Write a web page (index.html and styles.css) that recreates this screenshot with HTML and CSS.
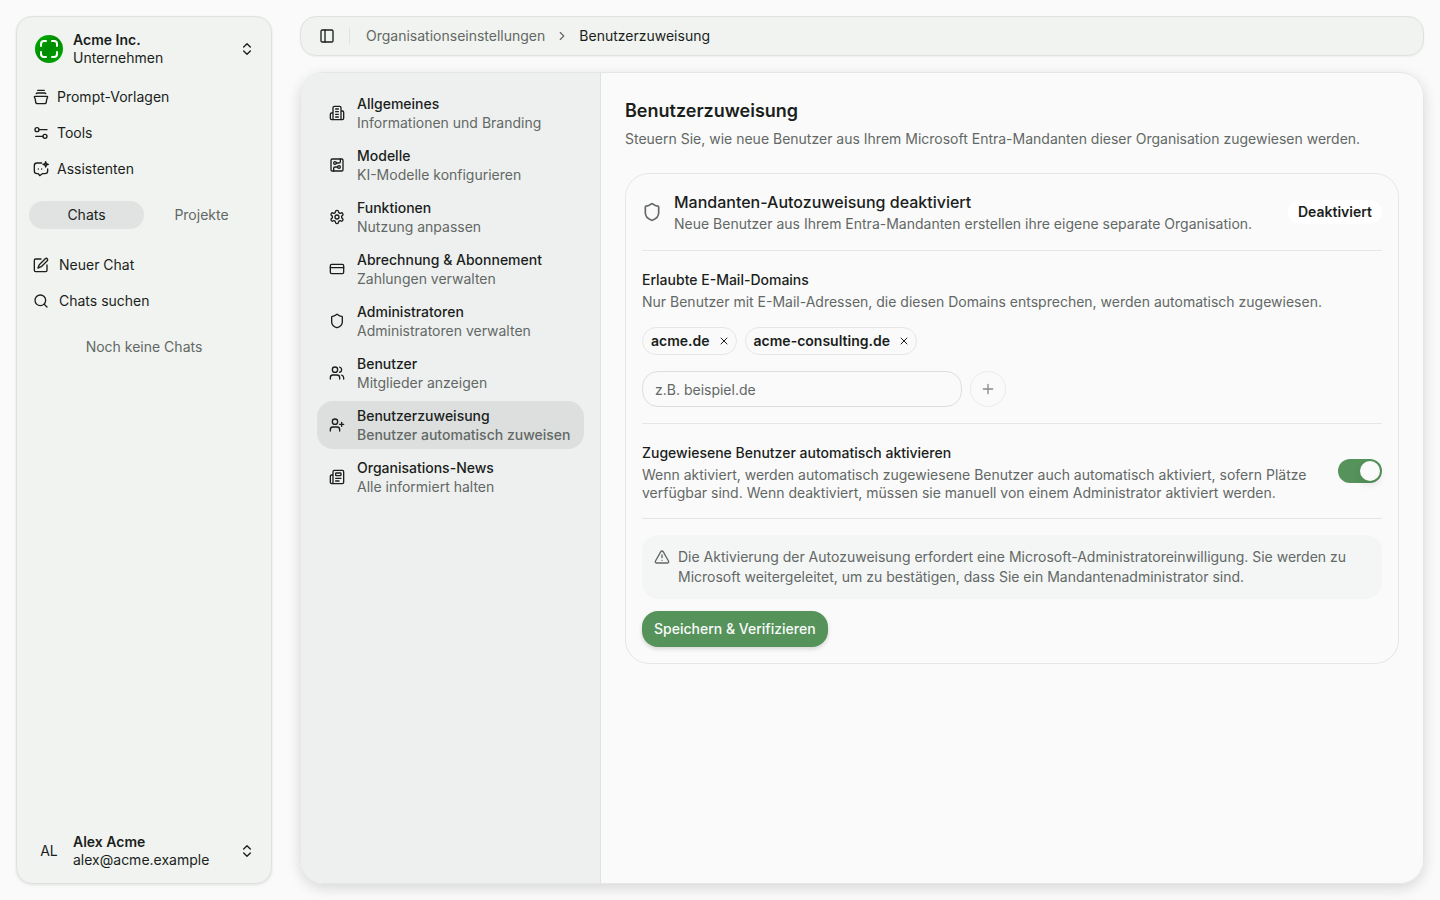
FILE: index.html
```
<!DOCTYPE html>
<html lang="de">
<head>
    <meta charset="UTF-8">
    <meta name="viewport" content="width=device-width, initial-scale=1.0">
    <title>Benutzerzuweisung</title>
    <link rel="stylesheet" href="styles.css">
</head>
<body>
    <aside class="sidebar">
        <button type="button" class="account">
            <span class="account-image">
                <svg class="logo" viewBox="0 0 28 28" fill="none" stroke="#fff" stroke-width="2" stroke-linecap="round">
                    <defs>
                        <linearGradient id="logoFill" x1="0" y1="0" x2="1" y2="1">
                            <stop offset="0" stop-color="#00b400"/>
                            <stop offset="0.5" stop-color="#008a00"/>
                            <stop offset="1" stop-color="#00b000"/>
                        </linearGradient>
                    </defs>
                    <circle cx="14" cy="14" r="14" fill="url(#logoFill)" stroke="none"/>
                    <path d="M6 11V9a3 3 0 0 1 3-3h2M17 6h2a3 3 0 0 1 3 3v2M22 17v2a3 3 0 0 1-3 3h-2M11 22H9a3 3 0 0 1-3-3v-2"/>
                </svg>
            </span>
            <span class="account-text">
                <strong>Acme Inc.</strong>
                <span>Unternehmen</span>
            </span>
            <svg class="icon" viewBox="0 0 24 24"><path d="m7 15 5 5 5-5M7 9l5-5 5 5"/></svg>
        </button>

        <nav class="menu">
            <a href="#" class="menu-item">
                <svg class="icon" viewBox="0 0 24 24"><path d="M7 2h10M5 7a2 2 0 0 1 2-1h10a2 2 0 0 1 2 1M3 11h18a1 1 0 0 1 1 1c0 1-1 1-1 2l-1 5a3 3 0 0 1-3 3H7a3 3 0 0 1-3-3l-1-5c0-1-1-1-1-2a1 1 0 0 1 1-1z"/></svg>
                Prompt-Vorlagen
            </a>
            <a href="#" class="menu-item">
                <svg class="icon" viewBox="0 0 24 24"><circle cx="6" cy="7" r="3"/><circle cx="18" cy="17" r="3"/><path d="M9 7h12M4 17h11"/></svg>
                Tools
            </a>
            <a href="#" class="menu-item">
                <svg class="icon" viewBox="0 0 24 24"><path d="M13 3H6a4 4 0 0 0-4 4v8a4 4 0 0 0 4 4h2l2 3 4-3h4a4 4 0 0 0 4-4v-3M19 1l1 3 3 1-3 1-1 3-1-3-3-1 3-1zM8 12h.01M13 12h.01"/></svg>
                Assistenten
            </a>
        </nav>

        <div class="tabs">
            <button type="button" class="tab active">Chats</button>
            <button type="button" class="tab">Projekte</button>
        </div>

        <nav class="menu chat-menu">
            <a href="#" class="menu-item">
                <svg class="icon" viewBox="0 0 24 24"><path d="M12 3H4a2 2 0 0 0-2 2v15a2 2 0 0 0 2 2h15a2 2 0 0 0 2-2v-8"/><path d="M18.4 2.6a2.1 2.1 0 0 1 3 3L12.400 14.600l-5 2 2-5z"/></svg>
                Neuer Chat
            </a>
            <a href="#" class="menu-item">
                <svg class="icon" viewBox="0 0 24 24"><circle cx="11" cy="11" r="8"/><path d="m21 21-4.300-4.300"/></svg>
                Chats suchen
            </a>
        </nav>
        <p class="no-chats">Noch keine Chats</p>

        <button type="button" class="account user">
            <span class="account-image initials">AL</span>
            <span class="account-text">
                <strong>Alex Acme</strong>
                <span>alex@acme.example</span>
            </span>
            <svg class="icon" viewBox="0 0 24 24"><path d="m7 15 5 5 5-5M7 9l5-5 5 5"/></svg>
        </button>
    </aside>

    <div class="page">
        <header class="topbar">
            <button type="button" class="toggle" aria-label="Seitenleiste umschalten">
                <svg class="icon" viewBox="0 0 24 24"><rect x="3" y="3" width="18" height="18" rx="2"/><path d="M9 3v18"/></svg>
            </button>
            <nav class="breadcrumb">
                <a href="#">Organisationseinstellungen</a>
                <svg class="icon" viewBox="0 0 24 24"><path d="m9 18 6-6-6-6"/></svg>
                <span>Benutzerzuweisung</span>
            </nav>
        </header>

        <div class="panel">
            <nav class="settings">
                <a href="#" class="settings-item">
                    <svg class="icon" viewBox="0 0 24 24"><path d="M6 22V4a2 2 0 0 1 2-2h8a2 2 0 0 1 2 2v18zM6 12H4a2 2 0 0 0-2 2v6a2 2 0 0 0 2 2h2M18 9h2a2 2 0 0 1 2 2v9a2 2 0 0 1-2 2h-2M10 6h4M10 10h4M10 14h4M10 18h4"/></svg>
                    <span class="settings-text"><strong>Allgemeines</strong><span>Informationen und Branding</span></span>
                </a>
                <a href="#" class="settings-item">
                    <svg class="icon" viewBox="0 0 24 24"><rect x="3" y="3" width="18" height="18" rx="2"/><path d="M11 9h4a2 2 0 0 0 2-2V3"/><circle cx="9" cy="9" r="2"/><path d="M7 21v-4a2 2 0 0 1 2-2h4"/><circle cx="15" cy="15" r="2"/></svg>
                    <span class="settings-text"><strong>Modelle</strong><span>KI-Modelle konfigurieren</span></span>
                </a>
                <a href="#" class="settings-item">
                    <svg class="icon" viewBox="0 0 24 24"><path d="M12.22 2h-.44a2 2 0 0 0-2 2v.18a2 2 0 0 1-1 1.73l-.43.25a2 2 0 0 1-2 0l-.15-.08a2 2 0 0 0-2.73.73l-.22.38a2 2 0 0 0 .73 2.73l.15.1a2 2 0 0 1 1 1.72v.51a2 2 0 0 1-1 1.74l-.15.09a2 2 0 0 0-.73 2.73l.22.38a2 2 0 0 0 2.73.73l.15-.08a2 2 0 0 1 2 0l.43.25a2 2 0 0 1 1 1.73V20a2 2 0 0 0 2 2h.44a2 2 0 0 0 2-2v-.18a2 2 0 0 1 1-1.73l.43-.25a2 2 0 0 1 2 0l.15.08a2 2 0 0 0 2.73-.73l.22-.39a2 2 0 0 0-.73-2.73l-.15-.08a2 2 0 0 1-1-1.74v-.5a2 2 0 0 1 1-1.74l.15-.09a2 2 0 0 0 .73-2.73l-.22-.38a2 2 0 0 0-2.73-.73l-.15.08a2 2 0 0 1-2 0l-.43-.25a2 2 0 0 1-1-1.73V4a2 2 0 0 0-2-2z"/><circle cx="12" cy="12" r="3"/></svg>
                    <span class="settings-text"><strong>Funktionen</strong><span>Nutzung anpassen</span></span>
                </a>
                <a href="#" class="settings-item">
                    <svg class="icon" viewBox="0 0 24 24"><rect x="2" y="5" width="20" height="14" rx="2"/><path d="M2 10h20"/></svg>
                    <span class="settings-text"><strong>Abrechnung &amp; Abonnement</strong><span>Zahlungen verwalten</span></span>
                </a>
                <a href="#" class="settings-item">
                    <svg class="icon" viewBox="0 0 24 24"><path d="M20 13c0 5-3.5 7.5-7.66 8.95a1 1 0 0 1-.67-.01C7.5 20.5 4 18 4 13V6a1 1 0 0 1 1-1c2 0 4.5-1.2 6.24-2.72a1.17 1.17 0 0 1 1.52 0C14.51 3.81 17 5 19 5a1 1 0 0 1 1 1z"/></svg>
                    <span class="settings-text"><strong>Administratoren</strong><span>Administratoren verwalten</span></span>
                </a>
                <a href="#" class="settings-item">
                    <svg class="icon" viewBox="0 0 24 24"><path d="M16 21v-2a4 4 0 0 0-4-4H6a4 4 0 0 0-4 4v2"/><circle cx="9" cy="7" r="4"/><path d="M22 21v-2a4 4 0 0 0-3-3.87M16 3.13a4 4 0 0 1 0 7.75"/></svg>
                    <span class="settings-text"><strong>Benutzer</strong><span>Mitglieder anzeigen</span></span>
                </a>
                <a href="#" class="settings-item active">
                    <svg class="icon" viewBox="0 0 24 24"><path d="M16 21v-2a4 4 0 0 0-4-4H6a4 4 0 0 0-4 4v2"/><circle cx="9" cy="7" r="4"/><path d="M19 8v6M22 11h-6"/></svg>
                    <span class="settings-text"><strong>Benutzerzuweisung</strong><span>Benutzer automatisch zuweisen</span></span>
                </a>
                <a href="#" class="settings-item">
                    <svg class="icon" viewBox="0 0 24 24"><path d="M15 18h-5M18 14h-8M4 22h16a2 2 0 0 0 2-2V4a2 2 0 0 0-2-2H8a2 2 0 0 0-2 2v16a2 2 0 0 1-4 0v-9a2 2 0 0 1 2-2h2"/><rect x="10" y="6" width="8" height="4" rx="1"/></svg>
                    <span class="settings-text"><strong>Organisations-News</strong><span>Alle informiert halten</span></span>
                </a>
            </nav>

            <main class="content">
                <h1>Benutzerzuweisung</h1>
                <p class="intro">Steuern Sie, wie neue Benutzer aus Ihrem Microsoft Entra-Mandanten dieser Organisation zugewiesen werden.</p>

                <div class="card">
                    <section class="status">
                        <svg class="icon icon-large" viewBox="0 0 24 24"><path d="M20 13c0 5-3.5 7.5-7.66 8.95a1 1 0 0 1-.67-.01C7.5 20.5 4 18 4 13V6a1 1 0 0 1 1-1c2 0 4.5-1.2 6.24-2.72a1.17 1.17 0 0 1 1.52 0C14.51 3.81 17 5 19 5a1 1 0 0 1 1 1z"/></svg>
                        <div class="status-text">
                            <h2>Mandanten-Autozuweisung deaktiviert</h2>
                            <p>Neue Benutzer aus Ihrem Entra-Mandanten erstellen ihre eigene separate Organisation.</p>
                        </div>
                        <span class="badge">Deaktiviert</span>
                    </section>

                    <section class="domains">
                        <label for="domain">Erlaubte E-Mail-Domains</label>
                        <p class="hint">Nur Benutzer mit E-Mail-Adressen, die diesen Domains entsprechen, werden automatisch zugewiesen.</p>
                        <div class="chips">
                            <span class="chip">acme.de
                                <button type="button" aria-label="acme.de entfernen"><svg class="icon icon-small" viewBox="0 0 24 24"><path d="M18 6 6 18M6 6l12 12"/></svg></button>
                            </span>
                            <span class="chip">acme-consulting.de
                                <button type="button" aria-label="acme-consulting.de entfernen"><svg class="icon icon-small" viewBox="0 0 24 24"><path d="M18 6 6 18M6 6l12 12"/></svg></button>
                            </span>
                        </div>
                        <div class="domain-form">
                            <input type="text" id="domain" name="domain" placeholder="z.B. beispiel.de">
                            <button type="button" class="add" aria-label="Domain hinzufügen" disabled>
                                <svg class="icon" viewBox="0 0 24 24"><path d="M5 12h14M12 5v14"/></svg>
                            </button>
                        </div>
                    </section>

                    <section class="activation">
                        <div class="activation-text">
                            <label for="auto_activate">Zugewiesene Benutzer automatisch aktivieren</label>
                            <p class="hint">Wenn aktiviert, werden automatisch zugewiesene Benutzer auch automatisch aktiviert, sofern Plätze verfügbar sind. Wenn deaktiviert, müssen sie manuell von einem Administrator aktiviert werden.</p>
                        </div>
                        <input type="checkbox" role="switch" class="switch" id="auto_activate" name="auto_activate" checked>
                    </section>

                    <section class="verify">
                        <div class="notice">
                            <svg class="icon" viewBox="0 0 24 24"><path d="m21.73 18-8-14a2 2 0 0 0-3.48 0l-8 14A2 2 0 0 0 4 21h16a2 2 0 0 0 1.73-3M12 9v4M12 17h.01"/></svg>
                            <p>Die Aktivierung der Autozuweisung erfordert eine Microsoft-Administratoreinwilligung. Sie werden zu Microsoft weitergeleitet, um zu bestätigen, dass Sie ein Mandantenadministrator sind.</p>
                        </div>
                        <button type="button" class="save">Speichern &amp; Verifizieren</button>
                    </section>
                </div>
            </main>
        </div>
    </div>
</body>
</html>
```
FILE: styles.css
```
* {
    margin: 0;
    padding: 0;
    box-sizing: border-box;
}

body {
    font-family: 'Inter', sans-serif;
    font-size: 14px;
    line-height: 20px;
    background-color: #fafafa;
    color: #1a1e1c;
    display: flex;
    gap: 28px;
    min-height: 100vh;
    padding: 16px;
}

a {
    color: inherit;
    text-decoration: none;
}

button, input {
    font: inherit;
    color: inherit;
    background: none;
    border: none;
}

button {
    cursor: pointer;
}

.icon {
    width: 16px;
    height: 16px;
    flex-shrink: 0;
    fill: none;
    stroke: currentColor;
    stroke-width: 2;
    stroke-linecap: round;
    stroke-linejoin: round;
}

.icon-large {
    width: 20px;
    height: 20px;
}

.icon-small {
    width: 12px;
    height: 12px;
}

/* Sidebar */
.sidebar {
    width: 256px;
    flex-shrink: 0;
    display: flex;
    flex-direction: column;
    padding: 8px;
    background-color: #f1f3f0;
    border: 1px solid #dfe2df;
    border-radius: 16px;
    box-shadow: 0 1px 3px rgba(0, 0, 0, 0.1);
}

.account {
    display: flex;
    align-items: center;
    gap: 8px;
    height: 48px;
    padding: 8px;
    text-align: left;
}

.account-image {
    width: 32px;
    height: 32px;
    display: flex;
    align-items: center;
    justify-content: center;
    border-radius: 50%;
}

.logo {
    width: 28px;
    height: 28px;
}

.initials {
    background-color: #f1f3f3;
}

.account-text {
    flex: 1;
    display: flex;
    flex-direction: column;
    line-height: 18px;
}

.account-text strong {
    font-weight: 600;
}

.user {
    margin-top: auto;
}

.menu {
    display: flex;
    flex-direction: column;
    gap: 4px;
    padding-top: 8px;
}

.menu-item {
    display: flex;
    align-items: center;
    gap: 8px;
    height: 32px;
    padding: 0 8px;
}

.tabs {
    display: flex;
    margin: 16px 4px 12px;
}

.tab {
    flex: 1;
    height: 28px;
    border-radius: 14px;
    color: #626865;
}

.tab.active {
    background-color: #e0e3e1;
    color: #1a1e1c;
}

.chat-menu .menu-item {
    gap: 10px;
}

.no-chats {
    margin-top: 20px;
    text-align: center;
    color: #626865;
}

/* Top bar */
.page {
    flex: 1;
    min-width: 0;
    display: flex;
    flex-direction: column;
    gap: 16px;
}

.topbar {
    display: flex;
    align-items: center;
    height: 40px;
    padding: 0 18px;
    background-color: #f1f3f0;
    border: 1px solid #dfe2df;
    border-radius: 16px;
    box-shadow: 0 1px 2px rgba(0, 0, 0, 0.05);
}

.toggle {
    display: flex;
}

.breadcrumb {
    display: flex;
    align-items: center;
    gap: 10px;
    margin-left: 14px;
}

.breadcrumb::before {
    content: "";
    width: 1px;
    height: 16px;
    margin-right: 6px;
    background-color: #dfe2df;
}

.breadcrumb a,
.breadcrumb .icon {
    color: #626865;
}

.breadcrumb .icon {
    width: 14px;
    height: 14px;
}

/* Settings panel */
.panel {
    flex: 1;
    display: flex;
    border: 1px solid #e5e7e6;
    border-radius: 24px;
    box-shadow: 0 4px 14px rgba(0, 0, 0, 0.14);
    overflow: hidden;
}

.settings {
    width: 300px;
    flex-shrink: 0;
    display: flex;
    flex-direction: column;
    gap: 4px;
    padding: 16px;
    background-color: #eef0ef;
    border-right: 1px solid #dfe2df;
}

.settings-item {
    display: flex;
    align-items: center;
    gap: 12px;
    height: 48px;
    padding: 0 12px;
    border-radius: 16px;
}

.settings-text {
    display: flex;
    flex-direction: column;
    line-height: 19px;
}

.settings-text strong {
    font-weight: 500;
}

.settings-text span {
    color: #626865;
}

.settings-item.active {
    background-color: #dcdfde;
    font-weight: 500;
}

.content {
    flex: 1;
    min-width: 0;
    padding: 24px;
}

h1 {
    font-size: 18px;
    line-height: 28px;
    font-weight: 600;
}

.intro {
    margin: 4px 0 24px;
    color: #626865;
}

.card {
    padding: 0 16px;
    border: 1px solid #e5e7e6;
    border-radius: 24px;
}

.card section {
    padding: 16px 0;
}

.card section + section {
    border-top: 1px solid #e5e7e6;
}

.card p {
    color: #626865;
}

.card label {
    display: block;
    line-height: 26px;
    font-weight: 500;
}

.hint {
    line-height: 18px;
}

.status {
    display: flex;
    align-items: center;
    gap: 12px;
}

.status .icon {
    color: #626865;
}

.status-text {
    flex: 1;
}

h2 {
    font-size: 16px;
    line-height: 24px;
    font-weight: 500;
}

.badge {
    padding: 2px 10px;
    border-radius: 12px;
    background-color: #fff;
    font-weight: 600;
}

.chips {
    display: flex;
    gap: 8px;
    margin: 16px 0;
}

.chip {
    display: flex;
    align-items: center;
    gap: 8px;
    height: 28px;
    padding: 0 6px 0 8px;
    border: 1px solid #e5e7e6;
    border-radius: 14px;
    font-weight: 600;
}

.chip button {
    display: flex;
}

.domain-form {
    display: flex;
    gap: 8px;
}

.domain-form input {
    width: 320px;
    height: 36px;
    padding: 0 12px;
    border: 1px solid #dcdfde;
    border-radius: 16px;
}

.domain-form input::placeholder {
    color: #626865;
}

.add {
    width: 36px;
    height: 36px;
    display: flex;
    align-items: center;
    justify-content: center;
    border: 1px solid #dcdfde;
    border-radius: 50%;
    opacity: 0.5;
}

.activation {
    display: flex;
    align-items: center;
    gap: 16px;
}

.activation-text {
    flex: 1;
}

.switch {
    appearance: none;
    display: flex;
    justify-content: flex-end;
    width: 44px;
    height: 24px;
    padding: 2px;
    border-radius: 12px;
    background-color: #55935b;
    cursor: pointer;
}

.switch::before {
    content: "";
    width: 20px;
    height: 20px;
    border-radius: 50%;
    background-color: #fafafa;
    box-shadow: 0 4px 8px rgba(0, 0, 0, 0.1);
}

.switch:not(:checked) {
    justify-content: flex-start;
    background-color: #dcdfde;
}

.notice {
    display: flex;
    gap: 8px;
    margin-bottom: 12px;
    padding: 12px;
    border-radius: 16px;
    background-color: #f4f6f5;
    color: #626865;
}

.notice .icon {
    margin-top: 2px;
}

.save {
    height: 36px;
    padding: 0 12px;
    border-radius: 16px;
    background-color: #55935b;
    color: #fafafa;
    font-weight: 500;
    box-shadow: 0 2px 4px rgba(0, 0, 0, 0.15);
}
```
